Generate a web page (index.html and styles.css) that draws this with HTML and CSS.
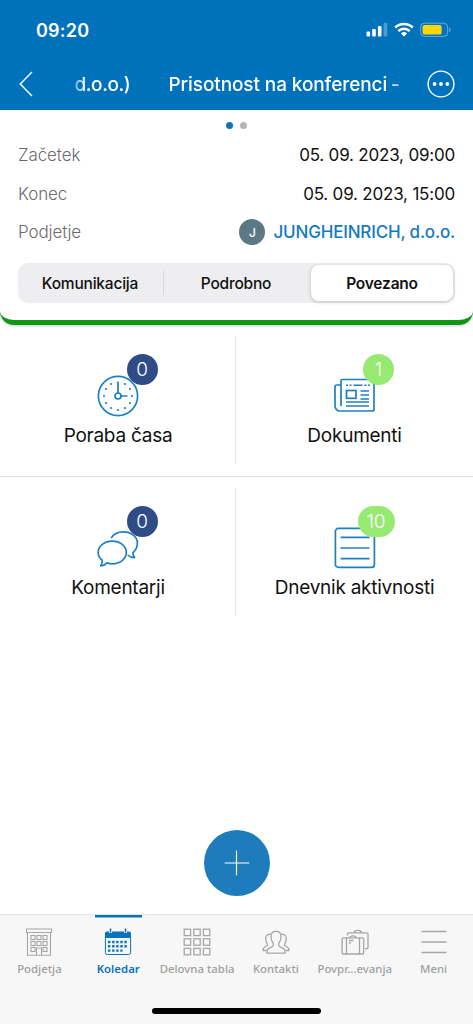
FILE: index.html
```html
<!DOCTYPE html>
<html lang="sl">
<head>
<meta charset="utf-8">
<meta name="viewport" content="width=device-width">
<title>Koledar</title>
<link rel="stylesheet" href="styles.css">
</head>
<body>
<div class="app">
  <header class="top">
    <div class="status">
      <span class="clock">09:20</span>
      <svg class="status-icons" width="86" height="16" viewBox="0 0 86 16">
        <g fill="#fff"><rect x="0.5" y="9.5" width="3.6" height="5" rx="1"/><rect x="6.2" y="7" width="3.6" height="7.5" rx="1"/><rect x="11.9" y="4" width="3.6" height="10.5" rx="1"/><rect x="17.6" y="0.8" width="3.6" height="13.7" rx="1" opacity=".3"/></g>
        <g fill="none" stroke="#fff" stroke-width="2.6"><path d="M29.2 5.5a12.8 12.8 0 0 1 17.6 0"/><path d="M32.3 9.1a8.2 8.2 0 0 1 11.4 0"/></g>
        <path d="M38 14.6l-3-3.1a4.4 4.4 0 0 1 6 0z" fill="#fff"/>
        <rect x="54.7" y="1.2" width="27" height="13.2" rx="4" fill="none" stroke="#fff" stroke-opacity=".4"/>
        <rect x="56.6" y="3" width="19" height="9.6" rx="2.2" fill="#ffd60a"/>
        <path d="M83.3 5.6v4.6c1.8-.8 1.8-3.8 0-4.6z" fill="#fff" opacity=".45"/>
      </svg>
    </div>
    <div class="nav">
      <svg class="back" width="14" height="26" viewBox="0 0 14 26" fill="none" stroke="#fff" stroke-width="1.4"><path d="M13 .9L1.2 13 13 25.1"/></svg>
      <div class="marquee"><span class="prev">d.o.o.)</span><span class="title">Prisotnost na konferenci</span><span class="dash">-</span></div>
      <svg class="more" width="28" height="28" viewBox="0 0 28 28"><circle cx="14" cy="14" r="12.9" fill="none" stroke="#fff" stroke-width="1.4"/><g fill="#fff"><circle cx="7.6" cy="14" r="1.9"/><circle cx="14" cy="14" r="1.9"/><circle cx="20.4" cy="14" r="1.9"/></g></svg>
    </div>
  </header>

  <section class="panel">
    <div class="dots"><i class="dot active"></i><i class="dot"></i></div>
    <div class="row"><span class="label">Začetek</span><span class="value">05. 09. 2023, 09:00</span></div>
    <div class="row"><span class="label">Konec</span><span class="value">05. 09. 2023, 15:00</span></div>
    <div class="row"><span class="label">Podjetje</span><span class="company"><span class="avatar">J</span><span class="link">JUNGHEINRICH, d.o.o.</span></span></div>
    <div class="segments">
      <div class="segment first"><span>Komunikacija</span></div>
      <div class="segment second"><span>Podrobno</span></div>
      <div class="segment selected"><span>Povezano</span></div>
    </div>
  </section>

  <main class="grid">
    <div class="tile left">
      <div class="icon"><svg width="42" height="42" viewBox="0 0 42 42" fill="none" stroke="#1f80c1" stroke-width="1.7"><circle cx="21" cy="21" r="19.6"/><circle cx="21" cy="21" r="3"/><path d="M21 18V6.5M24 21h6.5"/><g fill="#1f80c1" stroke="none"><circle cx="28" cy="9" r="1.1"/><circle cx="33" cy="14" r="1.1"/><circle cx="35" cy="21" r="1.1"/><circle cx="33" cy="28" r="1.1"/><circle cx="28" cy="33" r="1.1"/><circle cx="21" cy="35" r="1.1"/><circle cx="14" cy="33" r="1.1"/><circle cx="9" cy="28" r="1.1"/><circle cx="7" cy="21" r="1.1"/><circle cx="9" cy="14" r="1.1"/><circle cx="14" cy="9" r="1.1"/></g></svg><b class="badge navy">0</b></div>
      <span class="name">Poraba časa</span>
    </div>
    <div class="tile">
      <div class="icon"><svg width="42" height="42" viewBox="0 0 42 42" fill="none" stroke="#1f80c1" stroke-width="1.7"><path d="M7 31V5.500a1 1 0 0 1 1-1h31a1 1 0 0 1 1 1V34a2 2 0 0 1-2 2H6a5 5 0 0 1-5-5V12a2 2 0 0 1 2-2h4"/><path d="M12 10.200h2M15.500 10.200h2M19.500 10.200h9M30.500 10.200h2M34 10.200h2" stroke-width="1.500"/><rect x="12.500" y="15.500" width="9.500" height="7.800"/><path d="M26.500 16h8.500M26.500 20h8.500M26.500 24h8.500M12 27h23M12 31h23"/></svg><b class="badge green">1</b></div>
      <span class="name">Dokumenti</span>
    </div>
    <div class="tile left">
      <div class="icon"><svg width="42" height="42" viewBox="0 0 42 42" fill="none" stroke="#1f80c1" stroke-width="1.700" stroke-linejoin="round"><path d="M14.200 11.200C16.400 7 21.500 4.800 26.500 4.800c7.500 0 13.900 5 13.900 11.200 0 4.600-2.300 7.800-4.600 9.600.2 1.900.7 3.600 1.800 5-2.800.1-5.200-1-6.800-2.600"/><path d="M15.300 14.100c7.800 0 14 5 14 11.400S23.100 36.800 15.300 36.800c-2 0-3.700-.3-5.300-.9-1.600 1.900-3.700 2.800-6.300 3 1.200-1.700 1.800-3.600 1.600-5.600C2.600 31.500 1.200 28.700 1.200 25.500c0-6.400 6.300-11.400 14.100-11.400z"/></svg><b class="badge navy">0</b></div>
      <span class="name">Komentarji</span>
    </div>
    <div class="tile">
      <div class="icon"><svg width="42" height="42" viewBox="0 0 42 42" fill="none" stroke="#1f80c1" stroke-width="1.700"><rect x="1.400" y="1.400" width="39" height="39" rx="3"/><path d="M6.500 10.300h29M6.500 21h29M6.500 31.700h29"/></svg><b class="badge green wide">10</b></div>
      <span class="name">Dnevnik aktivnosti</span>
    </div>
  </main>

  <div class="action"><button class="add" aria-label="Dodaj"><svg width="26" height="26" viewBox="0 0 26 26" stroke="#fff" stroke-width="1.200"><path d="M12.500 .7v24.600M.7 13h24.600"/></svg></button></div>

  <footer class="bottom">
    <nav class="tabs">
      <div class="tab"><svg width="28" height="28" viewBox="0 0 28 28" fill="none" stroke="#a6a6a6" stroke-width="1.100"><path d="M1.500 1h25v3.500h-25zM2.500 4.500v22.800h23V4.500M11.500 27v-7h5v7"/><g><rect x="6" y="7.500" width="4" height="4"/><rect x="12" y="7.500" width="4" height="4"/><rect x="18" y="7.500" width="4" height="4"/><rect x="6" y="13.500" width="4" height="4"/><rect x="12" y="13.500" width="4" height="4"/><rect x="18" y="13.500" width="4" height="4"/><rect x="6" y="19.500" width="4" height="4"/><rect x="18" y="19.500" width="4" height="4"/></g></svg><span>Podjetja</span></div>
      <div class="tab current"><svg width="28" height="28" viewBox="0 0 28 28"><path d="M1 10V5.500a2 2 0 0 1 2-2h22a2 2 0 0 1 2 2V10z" fill="#0873bd"/><path d="M1.400 9v15.500a2 2 0 0 0 2 2h21.200a2 2 0 0 0 2-2V9" fill="none" stroke="#0873bd"/><path d="M6.500 1v4M21.500 1v4" stroke="#f7f7f7" stroke-width="3"/><path d="M6.500 .5v4M21.500 .5v4" stroke="#0873bd" stroke-width="1.500"/><g stroke="#0873bd" stroke-width="2.400" stroke-dasharray="2.400 1.700"><path d="M4 14h20.500M4 18.300h20.500M4 22.600h14.500"/></g></svg><span>Koledar</span></div>
      <div class="tab"><svg width="28" height="28" viewBox="0 0 28 28" fill="none" stroke="#a6a6a6" stroke-width="1.300"><rect x="1.200" y="1.200" width="6.400" height="6.400"/><rect x="10.800" y="1.200" width="6.400" height="6.400"/><rect x="20.400" y="1.200" width="6.400" height="6.400"/><rect x="1.200" y="10.800" width="6.400" height="6.400"/><rect x="10.800" y="10.800" width="6.400" height="6.400"/><rect x="20.400" y="10.800" width="6.400" height="6.400"/><rect x="1.200" y="20.400" width="6.400" height="6.400"/><rect x="10.800" y="20.400" width="6.400" height="6.400"/><rect x="20.400" y="20.400" width="6.400" height="6.400"/></svg><span>Delovna tabla</span></div>
      <div class="tab"><svg width="28" height="28" viewBox="0 0 28 28" fill="none" stroke="#a6a6a6" stroke-width="1.300" stroke-linejoin="round"><path d="M14 3.400c-3 0-5 2-5 4.800 0 2.500.3 4.500 1.800 6.300.7.900.7 3.200-.3 4-1.600 1.200-4.200 1.500-5 3.100-.5 1-.7 2.200-.7 3.600h18.400c0-1.400-.2-2.600-.7-3.600-.8-1.600-3.400-1.900-5-3.100-1-.8-1-3.100-.3-4 1.500-1.800 1.800-3.800 1.800-6.300 0-2.800-2-4.800-5-4.800z"/><path d="M8.500 6.300c-2.700-.4-4.800 1.200-4.800 4.200 0 2 .4 3.500 1.300 4.800.7 1 .4 2.200-.4 2.700-1.500 1-2.600 1.200-3.200 2.500-.3.700-.4 1.300-.4 2H4.500M19.500 6.300c2.700-.4 4.800 1.200 4.800 4.200 0 2-.4 3.500-1.300 4.800-.7 1-.4 2.200.4 2.700 1.500 1 2.600 1.200 3.200 2.500.3.700.4 1.300.4 2h-3.500"/></svg><span>Kontakti</span></div>
      <div class="tab"><svg width="28" height="28" viewBox="0 0 28 28" fill="none" stroke="#a6a6a6" stroke-width="1.300"><rect x="1.100" y="9.800" width="21.600" height="16.200" rx="1.200"/><path d="M5.500 9.800V26M18.500 9.800V26M8.700 9.800c.3-2.700 6.300-2.700 6.600 0M8 12.500h4.500M8 15h2M6.500 7.500V6A1.200 1.200 0 0 1 7.700 4.800h18.100A1.200 1.200 0 0 1 27 6v13.500a1.200 1.200 0 0 1-1.200 1.200h-1.600M13 4.800c.3-3.300 7.200-3.300 7.500 0"/></svg><span>Povpr...evanja</span></div>
      <div class="tab"><svg width="28" height="28" viewBox="0 0 28 28" stroke="#a6a6a6" stroke-width="1.400"><path d="M1.500 3.500h25M1.500 14h25M1.500 24.500h25"/></svg><span>Meni</span></div>
    </nav>
    <div class="home"></div>
  </footer>
</div>
</body>
</html>
```
FILE: styles.css
```css
* { box-sizing: border-box; }
body { margin: 0; background: #fff; font-family: Inter, "Noto Sans", sans-serif; }
svg { display: block; flex: none; }
span { white-space: nowrap; }
.app { width: 473px; height: 1024px; display: flex; flex-direction: column; overflow: hidden; color: #111; }

.top { height: 110px; flex: none; background: #0072bc; color: #fff; }
.status { height: 60px; display: flex; justify-content: space-between; align-items: center; padding: 0 21px 0 36px; }
.clock { font-size: 18px; font-weight: 600; letter-spacing: .2px; }
.nav { height: 48px; display: flex; align-items: center; padding: 0 18px 0 19px; }
.marquee { flex: 1; display: flex; align-items: center; margin-left: 41.500px; font-size: 19px; font-weight: 500; letter-spacing: -.1px; height: 30px; -webkit-mask-image: linear-gradient(90deg, #0006, #000 10px, #000 312px, #0009 325px); mask-image: linear-gradient(90deg, #0006, #000 10px, #000 312px, #0009 325px); }
.prev { width: 94px; letter-spacing: -.450px; }
.title { width: 222.500px; }

.panel { height: 215px; flex: none; padding: 12px 18px 0; background: #fff; border-bottom: 5px solid #109617; border-radius: 0 0 14px 14px; box-shadow: 0 1px 3px #0003; }
.dots { display: flex; justify-content: center; gap: 7px; height: 13px; }
.dot { width: 7px; height: 7px; border-radius: 50%; background: #b5b5b5; }
.dot.active { background: #0f73b5; }
.row { display: flex; justify-content: space-between; align-items: center; height: 39px; font-size: 17px; }
.row:nth-child(4) { height: 38px; }
.label { color: #6c6c6c; font-weight: 300; letter-spacing: -.1px; }
.value { letter-spacing: -.2px; }
.company { display: flex; align-items: center; gap: 8px; }
.avatar { width: 26px; height: 26px; border-radius: 50%; background: #5c7885; color: #fff; font-size: 12px; font-weight: 500; display: flex; align-items: center; justify-content: center; }
.link { color: #147abf; font-weight: 500; letter-spacing: -.180px; }
.segments { display: grid; grid-template-columns: 146px 146px 1fr; height: 40px; margin-top: 12px; background: #eeeef0; border-radius: 10px; font-size: 15.500px; font-weight: 500; letter-spacing: -.2px; }
.segment { display: flex; align-items: center; justify-content: center; padding-top: 1px; }
.segment.first { padding-right: 2px; background: linear-gradient(#d8d8da, #d8d8da) right 8px / 1px 24px no-repeat; }
.segment.second { padding-right: 2px; }
.segment.selected { background: #fff; margin: 2px 2px 2px 1px; border-radius: 8px; font-weight: 600; box-shadow: 0 1px 4px #0003; }

.grid { display: grid; grid-template-columns: 236px 237px; grid-template-rows: 152px 152px; flex: none; }
.tile { display: flex; flex-direction: column; align-items: center; padding-top: 50px; }
.tile:nth-child(-n+2) { border-bottom: 1px solid #dedede; }
.tile.left { background: linear-gradient(#e6e6e6, #e6e6e6) right 11px / 1px 128px no-repeat; }
.icon { position: relative; width: 42px; height: 42px; }
.name { font-size: 19px; line-height: 24px; margin-top: 7px; letter-spacing: -.250px; }
.badge { position: absolute; left: 29.500px; top: -21px; width: 31px; height: 31px; border-radius: 16px; color: #fff; font-size: 19px; font-weight: 300; line-height: 31px; text-align: center; }
.badge.wide { left: 24px; width: 37px; }
.navy { background: #304c87; }
.green { background: #96ea72; }

.action { flex: 1; display: flex; justify-content: center; align-items: flex-end; padding-bottom: 18px; }
.add { width: 66px; height: 66px; border: 0; border-radius: 50%; background: #1e7bbc; display: flex; align-items: center; justify-content: center; padding: 0; }

.bottom { height: 110px; flex: none; background: #f7f7f7; border-top: 1px solid #e4e4e4; display: flex; flex-direction: column; align-items: center; }
.tabs { display: grid; grid-template-columns: repeat(6, 1fr); width: 473px; height: 93px; }
.tab { display: flex; flex-direction: column; align-items: center; gap: 4px; padding-top: 13px; color: #a0a0a0; font: 500 11.400px/18px "Noto Sans", sans-serif; }
.tab.current { color: #0873bd; font-weight: 600; background: linear-gradient(#0873bd, #0873bd) center 0 / 47px 2.500px no-repeat; }
.home { width: 169px; height: 6px; border-radius: 3px; background: #000; }
```
